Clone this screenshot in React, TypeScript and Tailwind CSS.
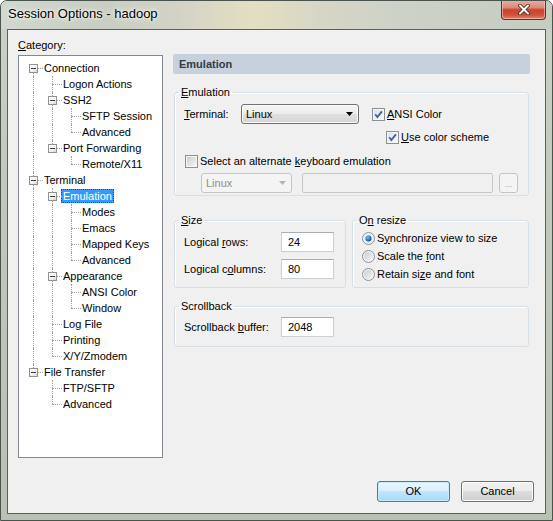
import React from "react";

type TreeItem = { label: string; children?: TreeItem[]; selected?: boolean };
type Row = {
  label: string;
  hasChildren: boolean;
  last: boolean;
  first: boolean;
  guides: boolean[];
  selected?: boolean;
};

const tree: TreeItem[] = [
  {
    label: "Connection",
    children: [
      { label: "Logon Actions" },
      { label: "SSH2", children: [{ label: "SFTP Session" }, { label: "Advanced" }] },
      { label: "Port Forwarding", children: [{ label: "Remote/X11" }] },
    ],
  },
  {
    label: "Terminal",
    children: [
      {
        label: "Emulation",
        selected: true,
        children: [{ label: "Modes" }, { label: "Emacs" }, { label: "Mapped Keys" }, { label: "Advanced" }],
      },
      { label: "Appearance", children: [{ label: "ANSI Color" }, { label: "Window" }] },
      { label: "Log File" },
      { label: "Printing" },
      { label: "X/Y/Zmodem" },
    ],
  },
  { label: "File Transfer", children: [{ label: "FTP/SFTP" }, { label: "Advanced" }] },
];

function flatten(items: TreeItem[], guides: boolean[], out: Row[]) {
  items.forEach((it, i) => {
    const last = i === items.length - 1;
    out.push({
      label: it.label,
      hasChildren: !!it.children,
      last,
      first: guides.length === 0 && i === 0,
      guides,
      selected: it.selected,
    });
    if (it.children) flatten(it.children, [...guides, !last], out);
  });
  return out;
}

const rows = flatten(tree, [], []);

const dot = "border-dotted border-[#a0a0a0]";

function TreeRow({ row }: { row: Row }) {
  return (
    <div className="flex h-[16px] items-start">
      {row.guides.map((g, i) => (
        <div key={i} className="relative h-[16px] w-[19px] shrink-0">
          {g && <span className={`absolute left-[9px] top-0 h-[16px] border-l ${dot}`} />}
        </div>
      ))}
      <div className="relative h-[16px] w-[19px] shrink-0">
        {!row.first && <span className={`absolute left-[9px] top-0 h-[8px] border-l ${dot}`} />}
        {!row.last && <span className={`absolute left-[9px] top-[8px] h-[8px] border-l ${dot}`} />}
        <span className={`absolute left-[9px] right-0 top-[8px] border-t ${dot}`} />
        {row.hasChildren && (
          <span className="absolute left-[5px] top-[4px] h-[9px] w-[9px] border border-[#919191] bg-[linear-gradient(135deg,#ffffff_0%,#f0f0f0_60%,#d8d8d8_100%)]">
            <span className="absolute left-[1px] top-[3px] h-[1px] w-[5px] bg-[#3c3c3c]" />
          </span>
        )}
      </div>
      <span
        className={`ml-[-1px] mt-[1px] h-[14px] whitespace-nowrap border px-[1px] leading-[12px] ${
          row.selected ? "border-dotted border-[#1d4f8c] bg-[#3399ff] text-white" : "border-transparent"
        }`}
      >
        {row.label}
      </span>
    </div>
  );
}

function CheckBox({ checked }: { checked?: boolean }) {
  return (
    <svg width="13" height="13" viewBox="0 0 13 13" className="shrink-0">
      <defs>
        <linearGradient id="cbInner" x1="0" y1="0" x2="1" y2="1">
          <stop offset="0" stopColor="#c8ccd2" />
          <stop offset="1" stopColor="#f6f6f7" />
        </linearGradient>
        <linearGradient id="cbChecked" x1="0" y1="0" x2="1" y2="1">
          <stop offset="0" stopColor="#d6e4f3" />
          <stop offset="1" stopColor="#f4f8fc" />
        </linearGradient>
      </defs>
      <rect x="0.5" y="0.5" width="12" height="12" fill="#f5f5f5" stroke="#8e8f8f" />
      <rect x="2" y="2" width="9" height="9" fill={checked ? "url(#cbChecked)" : "url(#cbInner)"} />
      {checked && <path d="M3.2 6.3 L5.4 9 L9.9 3.4" fill="none" stroke="#4a5f8e" strokeWidth="1.8" />}
    </svg>
  );
}

function Radio({ checked }: { checked?: boolean }) {
  return (
    <svg width="13" height="13" viewBox="0 0 13 13" className="shrink-0">
      <defs>
        <linearGradient id="rdInner" x1="0" y1="0" x2="1" y2="1">
          <stop offset="0" stopColor="#c8ccd2" />
          <stop offset="1" stopColor="#f6f6f7" />
        </linearGradient>
        <radialGradient id="rdDot" cx="0.4" cy="0.35" r="0.7">
          <stop offset="0" stopColor="#8cc8f4" />
          <stop offset="0.5" stopColor="#2c7cc8" />
          <stop offset="1" stopColor="#174f8e" />
        </radialGradient>
      </defs>
      <circle cx="6.5" cy="6.5" r="6" fill="#f5f5f5" stroke="#8e8f8f" />
      <circle cx="6.5" cy="6.5" r="4.5" fill={checked ? "#dfe9f4" : "url(#rdInner)"} />
      {checked && <circle cx="6.5" cy="6.5" r="3" fill="url(#rdDot)" />}
    </svg>
  );
}

function Arrow({ color }: { color: string }) {
  return (
    <svg width="7" height="4" viewBox="0 0 7 4" className="shrink-0">
      <path d="M0 0 H7 L3.5 4 Z" fill={color} />
    </svg>
  );
}

function Combo({ value, disabled, className }: { value: string; disabled?: boolean; className: string }) {
  return (
    <div
      className={`flex h-[20px] items-center justify-between rounded-[3px] border pl-[4px] pr-[5px] ${
        disabled
          ? "border-[#c2c5c8] bg-[#f4f4f4] text-[#8d8d8d]"
          : "border-[#707070] bg-[linear-gradient(#f4f4f4_0%,#ececec_50%,#e0e0e0_50%,#d6d6d6_100%)] shadow-[inset_0_0_0_1px_#fbfbfb]"
      } ${className}`}
    >
      <span>{value}</span>
      <Arrow color={disabled ? "#b4b4b4" : "#000"} />
    </div>
  );
}

function Field({ value }: { value: string }) {
  return (
    <div className="h-[20px] w-[53px] border border-[#cdd1d6] border-t-[#abadb3] bg-white pl-[6px] leading-[18px]">
      {value}
    </div>
  );
}

function Group({ title, children, className }: { title: React.ReactNode; children: React.ReactNode; className: string }) {
  return (
    <fieldset className={`rounded-[3px] border border-[#d5dfe5] px-[9px] shadow-[inset_1px_1px_0_#ffffff] ${className}`}>
      <legend className="ml-[-5px] px-[2px] leading-[13px]">{title}</legend>
      {children}
    </fieldset>
  );
}

function U({ children }: { children: React.ReactNode }) {
  return <span className="underline underline-offset-[1px]">{children}</span>;
}

export default function App() {
  return (
    <div className="flex h-[521px] w-[553px] flex-col overflow-hidden rounded-t-[7px] border border-[#48544d] bg-[linear-gradient(180deg,#cbd2c6_0%,#bfc8ba_40%,#b8c1b3_100%)] font-['Liberation_Sans',Arial,sans-serif] text-[11px] text-black">
      {/* title bar */}
      <div className="flex h-[28px] shrink-0 items-start justify-between bg-[linear-gradient(90deg,#d2d7cf_0%,#c8cec4_18%,#d3d2c6_32%,#e4dfc2_46%,#d7d6c6_58%,#cdd2c8_72%,#c5ccc1_100%)]">
        <span className="pl-[7px] pt-[5px] text-[13px] leading-[16px] [text-shadow:0_0_6px_#ffffff,0_0_3px_#ffffff]">
          Session Options - hadoop
        </span>
        <div className="mr-[6px] -mt-[1px] flex h-[20px] w-[45px] items-center justify-center rounded-b-[4px] border border-t-0 border-[#6b2a24] bg-[linear-gradient(180deg,#eab0a2_0%,#d98a7a_40%,#c8432f_52%,#cf4f38_78%,#e9846a_100%)] shadow-[inset_0_0_0_1px_rgba(255,210,200,0.55)]">
          <svg width="12" height="11" viewBox="0 0 12 11">
            <path d="M2 1.5 L10 9.5 M10 1.5 L2 9.5" stroke="#4a1c18" strokeWidth="3.6" strokeLinecap="round" />
            <path d="M2 1.5 L10 9.5 M10 1.5 L2 9.5" stroke="#ffffff" strokeWidth="2" strokeLinecap="round" />
          </svg>
        </div>
      </div>

      {/* client area */}
      <div className="mx-[6px] flex h-[485px] shrink-0 flex-col border border-[#56625b] bg-[#f0f0f0] pl-[10px] pr-[11px] pt-[8px]">
        <div className="flex items-start">
          <div className="w-[145px] shrink-0">
            <div className="h-[14px] leading-[14px]">
              <U>C</U>ategory:
            </div>
            <div className="mt-[3px] h-[403px] border border-[#828790] bg-white pl-[5px] pt-[4px]">
              {rows.map((r, i) => (
                <TreeRow key={i} row={r} />
              ))}
            </div>
          </div>

          <div className="ml-[10px] w-[357px] shrink-0">
            <div className="mt-[16px] h-[20px] rounded-[2px] bg-[#c7d1de] pl-[6px] font-bold leading-[20px] text-[#333a44]">
              Emulation
            </div>

            <Group title={<><U>E</U>mulation</>} className="mx-[1px] mt-[12px] pb-[2px]">
              <div className="mt-[5px] flex h-[20px] items-center">
                <span className="w-[57px] shrink-0">
                  <U>T</U>erminal:
                </span>
                <Combo value="Linux" className="w-[118px]" />
                <span className="ml-[13px]">
                  <CheckBox checked />
                </span>
                <span className="ml-[2px]">
                  <U>A</U>NSI Color
                </span>
              </div>
              <div className="mt-[7px] flex h-[13px] items-center">
                <span className="ml-[202px]">
                  <CheckBox checked />
                </span>
                <span className="ml-[2px]">
                  <U>U</U>se color scheme
                </span>
              </div>
              <div className="mt-[11px] flex h-[13px] items-center">
                <span className="ml-[1px]">
                  <CheckBox />
                </span>
                <span className="ml-[2px]">
                  Select an alternate <U>k</U>eyboard emulation
                </span>
              </div>
              <div className="mt-[5px] flex h-[20px] items-center">
                <Combo value="Linux" disabled className="ml-[17px] w-[91px]" />
                <div className="ml-[10px] h-[20px] w-[191px] rounded-[2px] border border-[#c5c8cb] bg-[#f0f0f0]" />
                <div className="ml-[6px] flex h-[20px] w-[19px] items-end justify-center rounded-[3px] border border-[#c2c5c8] bg-[#f4f4f4] pb-[3px] text-[9px] leading-[9px] text-[#a8a8a8]">
                  ...
                </div>
              </div>
            </Group>

            <div className="mx-[1px] mt-[18px] flex gap-[6px]">
              <Group title={<><U>S</U>ize</>} className="w-[172px] shrink-0 pb-[8px]">
                <div className="mt-[5px] flex h-[20px] items-center">
                  <span className="w-[97px] shrink-0">
                    Logical <U>r</U>ows:
                  </span>
                  <Field value="24" />
                </div>
                <div className="mt-[7px] flex h-[20px] items-center">
                  <span className="w-[97px] shrink-0">
                    Logical c<U>o</U>lumns:
                  </span>
                  <Field value="80" />
                </div>
              </Group>
              <Group title={<>O<U>n</U> resize</>} className="flex-1 pb-[4px]">
                <div className="mt-[2px] flex h-[18px] items-center gap-[2px]">
                  <Radio checked />
                  <span>
                    S<U>y</U>nchronize view to size
                  </span>
                </div>
                <div className="flex h-[18px] items-center gap-[2px]">
                  <Radio />
                  <span>
                    Scale the <U>f</U>ont
                  </span>
                </div>
                <div className="flex h-[18px] items-center gap-[2px]">
                  <Radio />
                  <span>
                    Retain si<U>z</U>e and font
                  </span>
                </div>
              </Group>
            </div>

            <Group title="Scrollback" className="mx-[1px] mt-[12px] pb-[9px]">
              <div className="mt-[4px] flex h-[20px] items-center">
                <span className="w-[97px] shrink-0">
                  Scrollback <U>b</U>uffer:
                </span>
                <Field value="2048" />
              </div>
            </Group>
          </div>
        </div>

        <div className="mt-[23px] flex justify-end gap-[11px]">
          <button className="h-[21px] w-[73px] rounded-[3px] border border-[#3c7fb1] bg-[linear-gradient(#eaf6fd_0%,#d9f0fc_50%,#bee6fd_50%,#a7d9f5_100%)] leading-[19px] shadow-[inset_0_0_0_1px_#c8ecfb]">
            OK
          </button>
          <button className="h-[21px] w-[73px] rounded-[3px] border border-[#707070] bg-[linear-gradient(#f2f2f2_0%,#ebebeb_50%,#dddddd_50%,#cfcfcf_100%)] leading-[19px] shadow-[inset_0_0_0_1px_#fcfcfc]">
            Cancel
          </button>
        </div>
      </div>
    </div>
  );
}
